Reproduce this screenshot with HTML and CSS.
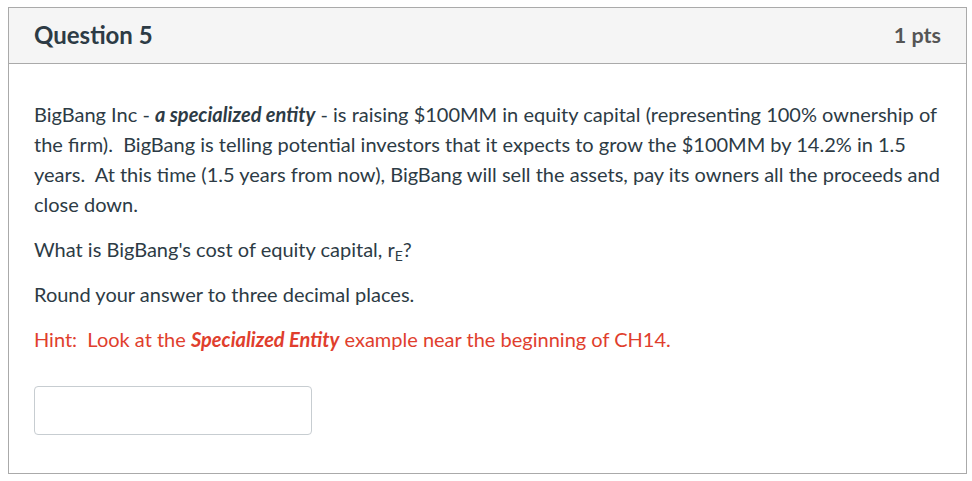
FILE: index.html
```html
<!DOCTYPE html>
<html>
<head>
<meta charset="utf-8">
<link rel="stylesheet" href="styles.css">
</head>
<body>
<div class="question">
  <div class="header">
    <h2 class="title">Question 5</h2>
    <span class="points">1 pts</span>
  </div>
  <div class="content">
    <p>BigBang Inc - <strong><em>a specialized entity</em></strong> - is raising $100MM in equity capital (representing 100% ownership of the firm).&nbsp; BigBang is telling potential investors that it expects to grow the $100MM by 14.2% in 1.5 years.&nbsp; At this time (1.5 years from now), BigBang will sell the assets, pay its owners all the proceeds and close down.</p>
    <p>What is BigBang's cost of equity capital, r<sub>E</sub>?</p>
    <p>Round your answer to three decimal places.</p>
    <p class="hint">Hint:&nbsp; Look at the <strong><em>Specialized Entity</em></strong> example near the beginning of CH14.</p>
    <input class="answer" type="text">
  </div>
</div>
</body>
</html>
```
FILE: styles.css
```css
html, body {
  margin: 0;
  padding: 0;
  background: #fff;
}
body {
  padding: 7px 5px 0 8px;
  font-family: Lato, "Liberation Sans", sans-serif;
  color: #2d3b45;
}
.question {
  border: 1px solid #aaaaaa;
  box-sizing: border-box;
  height: 467px;
}
.header {
  display: flex;
  align-items: center;
  justify-content: space-between;
  height: 56px;
  box-sizing: border-box;
  padding: 0 25px 2px 25px;
  background: #f5f5f5;
  border-bottom: 1px solid #aaaaaa;
}
.title {
  margin: 0;
  font-size: 24px;
  font-weight: 700;
  color: #2d3b45;
}
.points {
  font-size: 21.5px;
  font-weight: 700;
  color: #555555;
}
.content {
  padding: 35px 25px 0 25px;
  font-size: 20px;
  line-height: 30px;
}
.content p {
  margin: 0 0 15px 0;
}
.content sub {
  font-size: 14px;
  line-height: 0;
  vertical-align: -4px;
}
.hint {
  color: #e03e2d;
}
.answer {
  display: block;
  margin-top: 32px;
  width: 278px;
  height: 49px;
  box-sizing: border-box;
  border: 1px solid #c7cdd1;
  border-radius: 4px;
  background: #fff;
  padding: 0 8px;
  font-size: 16px;
}
```
